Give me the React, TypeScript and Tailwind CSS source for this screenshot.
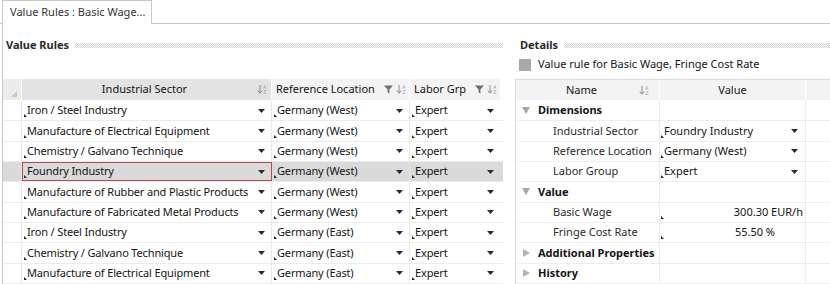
import React from 'react';

const FONT = { fontFamily: '"Noto Sans", "Open Sans", sans-serif' };

function SortIcon() {
  return (
    <svg width="10" height="11" viewBox="0 0 10 11" aria-hidden className="shrink-0">
      <path d="M3 1v8M0.8 6.6L3 9.2 5.2 6.6" stroke="#8a8a8a" strokeWidth="1" fill="none" />
      <text x="6.2" y="4.6" fontSize="4.6" fill="#9a9a9a" fontFamily="Liberation Sans, sans-serif">A</text>
      <text x="6.4" y="9.8" fontSize="4.6" fill="#9a9a9a" fontFamily="Liberation Sans, sans-serif">Z</text>
    </svg>
  );
}

function FilterIcon() {
  return (
    <svg width="9" height="9" viewBox="0 0 9 9" aria-hidden className="shrink-0">
      <path d="M0 0.5h9L5.4 4.6V8.5L3.6 7.6V4.6Z" fill="#6e6e6e" />
    </svg>
  );
}

function Caret() {
  return (
    <svg width="7" height="4" viewBox="0 0 7 4" aria-hidden className="shrink-0">
      <path d="M0 0h7L3.5 4Z" fill="#2a2a2a" />
    </svg>
  );
}

function Mark() {
  return (
    <svg width="3" height="3" viewBox="0 0 3 3" aria-hidden className="shrink-0 self-end mb-[3px]">
      <path d="M0 0v3h3Z" fill="#222" />
    </svg>
  );
}

function Dots({ className = '' }: { className?: string }) {
  return (
    <div
      className={`h-[5px] bg-[repeating-conic-gradient(#cfcfcf_0_25%,transparent_0_50%)] bg-[length:2px_2px] ${className}`}
    />
  );
}

const rules = [
  ['Iron / Steel Industry', 'Germany (West)'],
  ['Manufacture of Electrical Equipment', 'Germany (West)'],
  ['Chemistry / Galvano Technique', 'Germany (West)'],
  ['Foundry Industry', 'Germany (West)'],
  ['Manufacture of Rubber and Plastic Products', 'Germany (West)'],
  ['Manufacture of Fabricated Metal Products', 'Germany (West)'],
  ['Iron / Steel Industry', 'Germany (East)'],
  ['Chemistry / Galvano Technique', 'Germany (East)'],
  ['Manufacture of Electrical Equipment', 'Germany (East)'],
];

function DropCell({ text, width, selected = false, last = false }: { text: string; width: string; selected?: boolean; last?: boolean }) {
  return (
    <div
      className={`${width} flex items-center pl-[2px] pr-[6px] ${last ? '' : 'border-r border-[#e8e8e8]'} ${
        selected ? 'outline outline-1 outline-[#b3474d] -outline-offset-1' : ''
      }`}
    >
      <Mark />
      <span className="flex-1 whitespace-nowrap overflow-hidden tracking-[-0.15px]">{text}</span>
      <Caret />
    </div>
  );
}

function ValueRulesGrid() {
  return (
    <div className="flex flex-col text-[11px] text-[#141414]">
      <div className="flex h-[22px] border-b border-white">
        <div className="w-[19px] bg-[#ececec] flex items-end justify-end pr-[4px] pb-[3px] border-r border-white">
          <svg width="6" height="6" viewBox="0 0 6 6" aria-hidden>
            <path d="M6 0v6H0Z" fill="#c9c9c9" />
          </svg>
        </div>
        <div className="w-[250px] bg-[#e3e3e3] flex items-center pr-[4px] border-r border-white">
          <span className="flex-1 text-center pl-[10px]">Industrial Sector</span>
          <SortIcon />
        </div>
        <div className="w-[138px] bg-[#f3f3f3] flex items-center pl-[4px] pr-[3px] gap-[3px] border-r border-white">
          <span className="flex-1 whitespace-nowrap">Reference Location</span>
          <FilterIcon />
          <SortIcon />
        </div>
        <div className="w-[90px] bg-[#f3f3f3] flex items-center pl-[4px] pr-[3px] gap-[3px]">
          <span className="flex-1 whitespace-nowrap">Labor Grp</span>
          <FilterIcon />
          <SortIcon />
        </div>
      </div>
      {rules.map(([sector, loc], i) => {
        const sel = i === 3;
        return (
          <div key={i} className={`flex h-[20.33px] border-b border-[#ececec] ${sel ? 'bg-[#dadada]' : ''}`}>
            <div className="w-[19px] border-r border-[#e8e8e8]" />
            <DropCell text={sector} width="w-[250px]" selected={sel} />
            <DropCell text={loc} width="w-[138px]" />
            <DropCell text="Expert" width="w-[90px]" last />
          </div>
        );
      })}
    </div>
  );
}

type PropRow =
  | { kind: 'group'; label: string; open: boolean }
  | { kind: 'drop'; label: string; value: string }
  | { kind: 'num'; label: string; value: string; pad: string };

const props: PropRow[] = [
  { kind: 'group', label: 'Dimensions', open: true },
  { kind: 'drop', label: 'Industrial Sector', value: 'Foundry Industry' },
  { kind: 'drop', label: 'Reference Location', value: 'Germany (West)' },
  { kind: 'drop', label: 'Labor Group', value: 'Expert' },
  { kind: 'group', label: 'Value', open: true },
  { kind: 'num', label: 'Basic Wage', value: '300.30 EUR/h', pad: 'pr-[2px]' },
  { kind: 'num', label: 'Fringe Cost Rate', value: '55.50 %', pad: 'pr-[30px]' },
  { kind: 'group', label: 'Additional Properties', open: false },
  { kind: 'group', label: 'History', open: false },
];

function GroupArrow({ open }: { open: boolean }) {
  return open ? (
    <svg width="8" height="7" viewBox="0 0 8 7" aria-hidden>
      <path d="M0 0h8L4 7Z" fill="#a6a6a6" />
    </svg>
  ) : (
    <svg width="7" height="8" viewBox="0 0 7 8" aria-hidden>
      <path d="M0 0v8L7 4Z" fill="#b3b3b3" />
    </svg>
  );
}

function DetailsGrid() {
  return (
    <div className="flex flex-col text-[11px] text-[#141414] border-l border-t border-[#dcdcdc]">
      <div className="flex h-[21px] bg-[#f3f3f3] border-b border-white">
        <div className="w-[144px] flex items-center pr-[10px] border-r border-white">
          <span className="flex-1 text-center pl-[8px]">Name</span>
          <SortIcon />
        </div>
        <div className="w-[146px] text-center flex items-center justify-center border-r border-white">Value</div>
        <div className="flex-1" />
      </div>
      {props.map((p, i) => (
        <div key={i} className="flex h-[20.33px] border-b border-[#ededed]">
          {p.kind === 'group' ? (
            <div className="w-[144px] flex items-center pl-[6px] gap-[8px] border-r border-[#ececec] font-bold whitespace-nowrap">
              <span className="w-[8px] flex justify-center">
                <GroupArrow open={p.open} />
              </span>
              <span>{p.label}</span>
            </div>
          ) : (
            <div className="w-[144px] flex items-center pl-[37px] border-r border-[#ececec] text-[#2a2a2a] whitespace-nowrap">
              {p.label}
            </div>
          )}
          <div className={`w-[146px] flex items-center border-r border-[#ececec] ${p.kind === 'group' ? '' : 'pl-[1px]'}`}>
            {p.kind === 'drop' && (
              <>
                <Mark />
                <span className="flex-1 whitespace-nowrap">{p.value}</span>
                <span className="pr-[7px]">
                  <Caret />
                </span>
              </>
            )}
            {p.kind === 'num' && (
              <>
                <Mark />
                <span className={`flex-1 text-right ${p.pad}`}>{p.value}</span>
              </>
            )}
          </div>
          <div className="flex-1" />
        </div>
      ))}
    </div>
  );
}

export default function App() {
  return (
    <div className="w-[830px] h-[284px] overflow-hidden bg-white text-[#141414]" style={FONT}>
      <div className="flex h-[24px]">
        <div className="w-[2px] border-b border-[#c8c8c8]" />
        <div className="w-[150px] border-l border-r border-t border-[#c8c8c8] flex items-center pl-[7px] text-[11px] text-[#333] whitespace-nowrap">
          Value Rules : Basic Wage...
        </div>
        <div className="flex-1 border-b border-[#c8c8c8]" />
      </div>
      <div className="ml-[2px] border-l border-[#c8c8c8] h-[260px] flex">
        <div className="w-[500px] flex flex-col">
          <div className="h-[30px] flex items-center pl-[3px] gap-[6px] pt-[13px] pb-[1px]">
            <span className="text-[11px] font-bold text-[#2a2a2a]">Value Rules</span>
            <Dots className="flex-1" />
          </div>
          <div className="h-[25px]" />
          <ValueRulesGrid />
        </div>
        <div className="w-[12px]" />
        <div className="flex-1 flex flex-col">
          <div className="h-[30px] flex items-center pl-[5px] gap-[6px] pt-[13px] pb-[1px]">
            <span className="text-[11px] font-bold text-[#2a2a2a]">Details</span>
            <Dots className="flex-1" />
          </div>
          <div className="h-[25px] flex items-center pl-[4px] gap-[7px] text-[11px] pb-[4px]">
            <div className="w-[12px] h-[12px] bg-[#a9a9a9]" />
            <span>Value rule for Basic Wage, Fringe Cost Rate</span>
          </div>
          <DetailsGrid />
        </div>
      </div>
    </div>
  );
}
